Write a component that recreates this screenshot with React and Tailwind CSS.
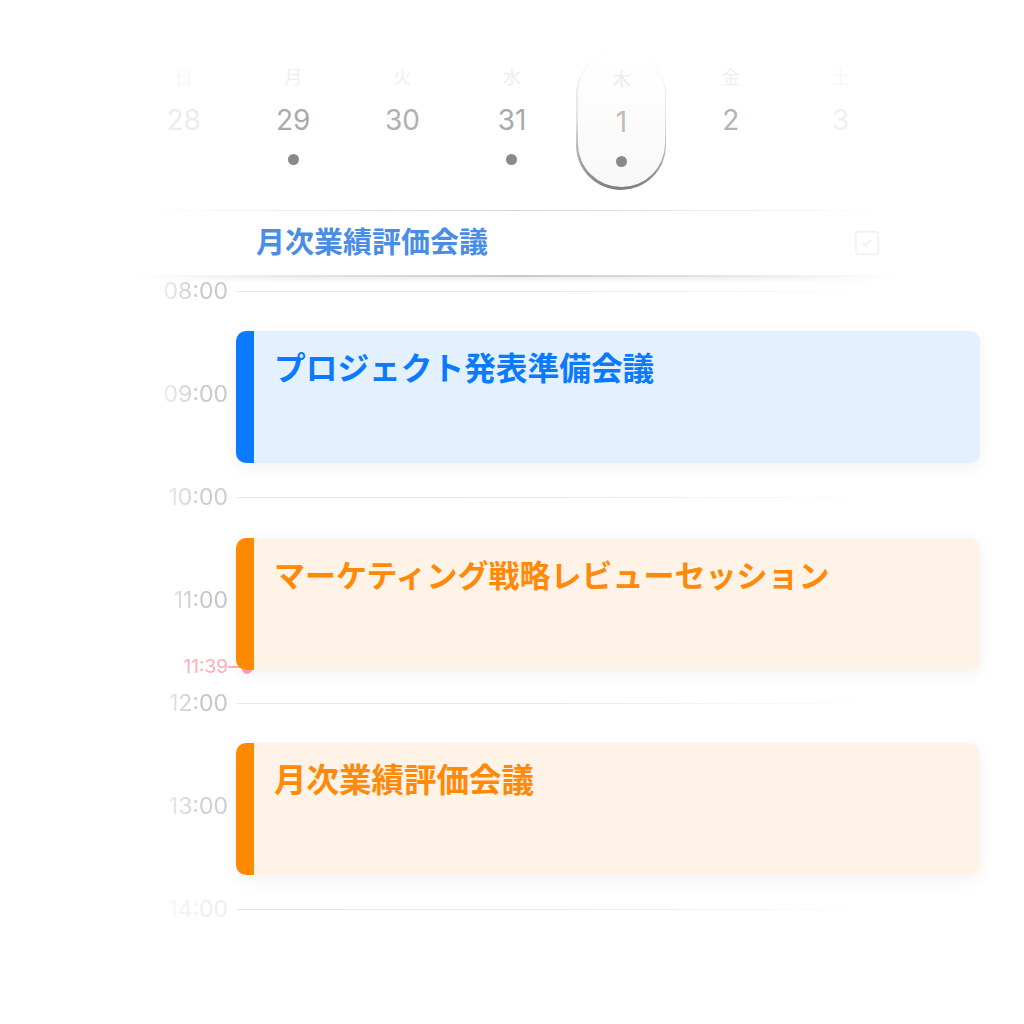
import { SquareCheck } from 'lucide-react';

const days = [
  { w: '日', d: '28', wc: 'text-[#f8f8f8]', dc: 'text-[#ececec]', dot: false },
  { w: '月', d: '29', wc: 'text-[#efefef]', dc: 'text-[#a9a9a9]', dot: true },
  { w: '火', d: '30', wc: 'text-[#f0f0f0]', dc: 'text-[#b0b0b0]', dot: false },
  { w: '水', d: '31', wc: 'text-[#eeeeee]', dc: 'text-[#a9a9a9]', dot: true },
  { w: '木', d: '1', wc: 'text-[#ececec]', dc: 'text-[#bdbdbd]', dot: true, sel: true },
  { w: '金', d: '2', wc: 'text-[#efefef]', dc: 'text-[#b3b3b3]', dot: false },
  { w: '土', d: '3', wc: 'text-[#f7f7f7]', dc: 'text-[#efefef]', dot: false },
];

const hours = [
  { t: '08:00', c: 'text-[#c9c9c9]' },
  { t: '09:00', c: 'text-[#c9c9c9]' },
  { t: '10:00', c: 'text-[#cdcdcd]' },
  { t: '11:00', c: 'text-[#c6c6c6]' },
  { t: '12:00', c: 'text-[#c6c6c6]' },
  { t: '13:00', c: 'text-[#cfcfcf]' },
  { t: '14:00', c: 'text-[#eeeeee]' },
];

const events = [
  { title: 'プロジェクト発表準備会議', top: 'top-[52px]', size: 'text-[31.7px]', bg: 'bg-[#e3f0fe]', bar: 'bg-[#0a7aff]', text: 'text-[#0a7aff]' },
  { title: 'マーケティング戦略レビューセッション', top: 'top-[259px]', size: 'text-[31px]', bg: 'bg-[#fff3e7]', bar: 'bg-[#ff8a00]', text: 'text-[#ff8a0a]' },
  { title: '月次業績評価会議', top: 'top-[464px]', size: 'text-[32.5px]', bg: 'bg-[#fff3e7]', bar: 'bg-[#ff8a00]', text: 'text-[#ff8a0a]' },
];

function DayCell({ day }) {
  const inner = (
    <div className="flex flex-col items-center pt-[16px]">
      <span className={`h-[24px] text-[18px] leading-[24px] ${day.wc}`}>{day.w}</span>
      <span className={`mt-[12px] h-[36px] text-[28px] leading-[36px] ${day.dc}`}>{day.d}</span>
      <span className={`mt-[16px] w-[11px] h-[11px] rounded-full ${day.dot ? 'bg-[#8a8a8a]' : 'bg-transparent'}`} />
    </div>
  );
  if (day.sel) {
    return (
      <div className="flex justify-center">
        <div className="w-[90px] h-[140px] rounded-full p-[1.5px] bg-gradient-to-b from-[#fbfbfb] via-[#e2e2e2] to-[#7d7d7d]">
          <div className="w-full h-full rounded-full bg-gradient-to-b from-white to-[#f8f8f8] -mt-[1.5px]">
            <div className="pt-[1.5px]">{inner}</div>
          </div>
        </div>
      </div>
    );
  }
  return <div className="flex justify-center h-[140px]">{inner}</div>;
}

export default function App() {
  return (
    <div
      className="relative w-[1024px] h-[1024px] bg-white overflow-hidden"
      style={{ fontFamily: '"Inter", "Noto Sans CJK JP", sans-serif' }}
    >
      {/* week strip */}
      <div className="pt-[50px]">
        <div className="ml-[129px] w-[766px] grid grid-cols-7">
          {days.map(d => <DayCell key={d.d} day={d} />)}
        </div>
      </div>

      <div className="mt-[20px] ml-[140px] w-[750px] h-px bg-gradient-to-r from-transparent via-[#d6d6d6] to-transparent" />

      {/* all-day row */}
      <div className="h-[64px] flex items-center">
        <span className="ml-[256px] text-[29px] font-bold text-[#4a8ce6]">月次業績評価会議</span>
        <SquareCheck className="ml-auto mr-[142px] w-[30px] h-[30px] text-[#eef2fb]" strokeWidth={1.5} />
      </div>

      <div className="ml-[130px] w-[770px]">
        <div className="h-[2px] bg-gradient-to-r from-transparent via-[#c9c9c9] to-transparent" />
        <div className="h-[6px] bg-gradient-to-b from-[#eeeeee] to-transparent [mask-image:linear-gradient(to_right,transparent,black_20%,black_80%,transparent)]" />
      </div>

      {/* timeline */}
      <div className="relative -mt-[4px]">
        {hours.map(h => (
          <div key={h.t} className="h-[103px]">
            <div className="flex items-center h-[24px]">
              <span
                className={`w-[228px] text-right text-[23px] leading-[24px] ${h.c} [mask-image:linear-gradient(to_right,transparent_160px,rgba(0,0,0,0.35)_165px,black_200px)]`}
              >
                {h.t}
              </span>
              <div className="ml-[9px] w-[645px] h-px bg-gradient-to-r from-[#e6e6e6] via-[#e8e8e8] to-transparent" />
            </div>
          </div>
        ))}

        {/* current time */}
        <div className="absolute top-[378px] left-0 flex items-center h-[20px]">
          <span className="w-[228px] text-right text-[19px] text-[#ffb0b5]">11:39</span>
          <div className="w-[14px] h-[1.5px] bg-[#ffb0b5]" />
          <div className="w-[10px] h-[10px] mt-[4px] rounded-full bg-[#ffa0a8]" />
        </div>

        {events.map(e => (
          <div
            key={e.title}
            className={`absolute ${e.top} left-[236px] w-[744px] h-[132px] flex rounded-[10px] overflow-hidden ${e.bg} shadow-[0_4px_18px_rgba(0,0,0,0.06)]`}
          >
            <div className={`w-[18px] h-full ${e.bar}`} />
            <div className={`pl-[20px] pt-[18px] ${e.size} leading-[40px] font-bold ${e.text}`}>{e.title}</div>
          </div>
        ))}
      </div>
    </div>
  );
}
